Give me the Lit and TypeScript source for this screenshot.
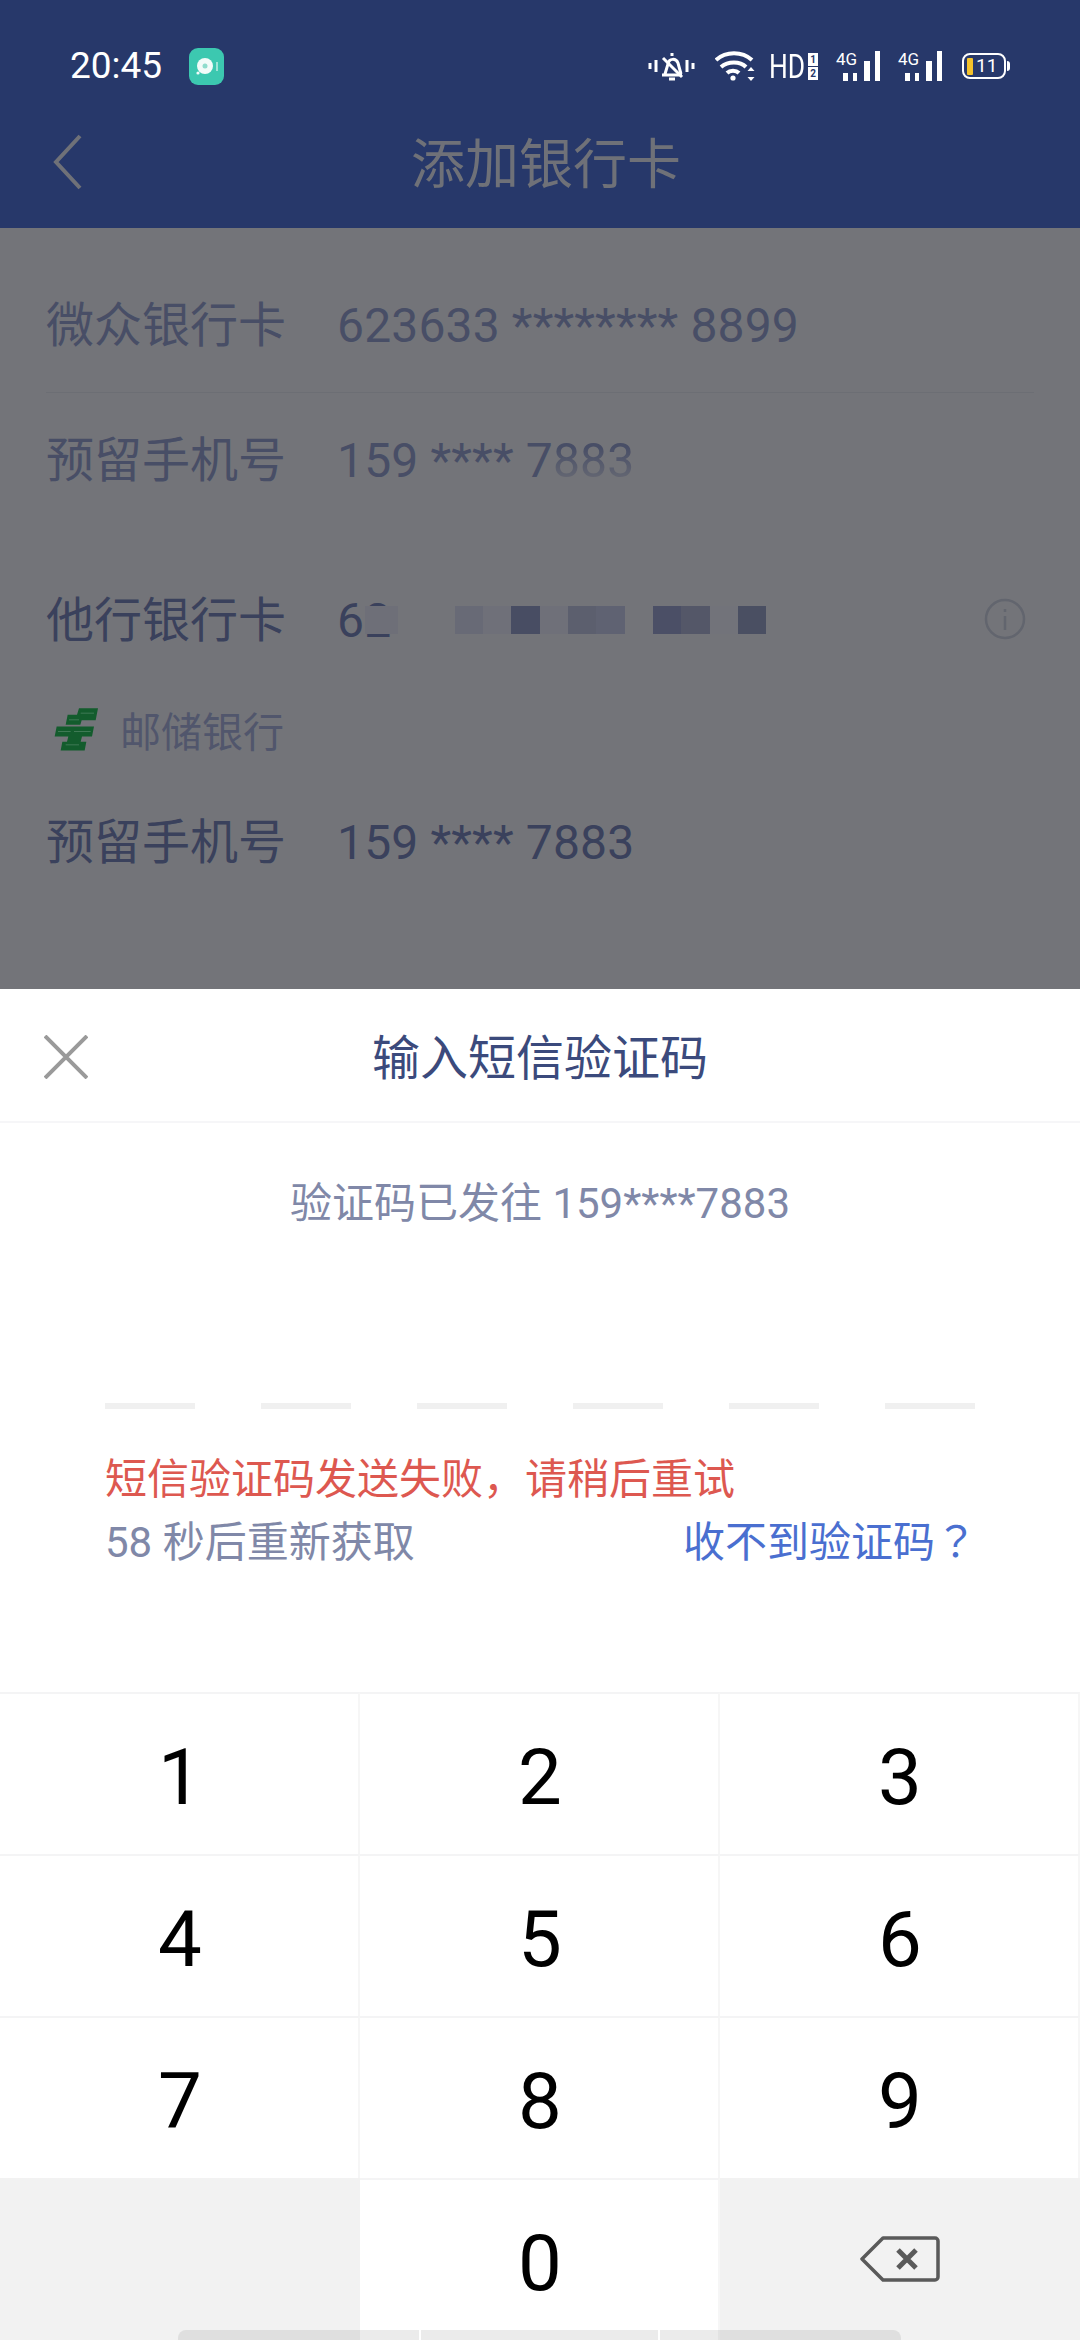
import { LitElement, html, css, svg } from 'lit';
import { customElement } from 'lit/decorators.js';

// pixelated patch over the other bank's card number
const MOSAIC = ['#6e6f78', '#737479', '#737479', '#686a76', '#6f7079', '#484d63', '#6f7079', '#5c5f6e', '#5f6272', '#737479', '#4b4f66', '#545768', '#72737a', '#4a4f62'];

const bars = svg`
  <rect x="7" y="22" width="5" height="8" />
  <rect x="17" y="22" width="4" height="8" />
  <rect x="28" y="10" width="6" height="20" />
  <rect x="39" y="0" width="5" height="30" />`;

@customElement('sim-signal')
class SimSignal extends LitElement {
  static styles = css`
    :host {
      display: block;
      position: relative;
      width: 44px;
      height: 30px;
    }
    svg {
      display: block;
      fill: #fff;
    }
    .net {
      position: absolute;
      left: 0;
      top: 1px;
      font: 17px/15px Roboto, sans-serif;
      color: #fff;
    }
  `;

  render() {
    return html`<svg width="44" height="30" viewBox="0 0 44 30">${bars}</svg><span class="net">4G</span>`;
  }
}

@customElement('status-bar')
class StatusBar extends LitElement {
  static styles = css`
    :host {
      display: flex;
      align-items: center;
      height: 86px;
      padding: 46px 68px 0 70px;
      box-sizing: border-box;
      color: #fff;
      font-family: Roboto, sans-serif;
    }
    .time {
      font-size: 37px;
      line-height: 40px;
      width: 119px;
    }
    .right {
      margin-left: auto;
      display: flex;
      align-items: center;
    }
    svg {
      display: block;
    }
    .wifi {
      margin-left: 20px;
    }
    .hd {
      font-size: 33px;
      line-height: 33px;
      width: 39px;
      margin-left: 14px;
      display: inline-block;
      transform: scaleX(0.8);
      transform-origin: left center;
    }
    .slots {
      display: flex;
      flex-direction: column;
      gap: 1px;
      width: 10px;
      margin-right: 18px;
    }
    .slots span {
      height: 13px;
      font: bold 10px/13px Roboto, sans-serif;
      text-align: center;
      background: #fff;
      color: #27386a;
    }
    sim-signal + sim-signal {
      margin-left: 18px;
    }
    .battery {
      position: relative;
      display: flex;
      align-items: center;
      margin: 0 6px 0 20px;
      width: 44px;
      height: 26px;
      border: 2px solid #fff;
      border-radius: 8px;
      box-sizing: border-box;
      padding-left: 3px;
      font-size: 19px;
      line-height: 22px;
    }
    .battery i {
      width: 6px;
      height: 17px;
      background: #f4c22b;
      margin-right: 3px;
      border-radius: 1px;
    }
    .battery::after {
      content: '';
      position: absolute;
      right: -6px;
      top: 6px;
      width: 3px;
      height: 10px;
      border-radius: 0 3px 3px 0;
      background: #fff;
    }
  `;

  render() {
    return html`
      <span class="time">20:45</span>
      <svg width="35" height="37" viewBox="0 0 35 37">
        <rect width="35" height="37" rx="9" fill="#3cc8b0" />
        <circle cx="16" cy="18" r="8" fill="#f2fbf9" />
        <circle cx="16" cy="18" r="2.5" fill="#8fdccd" />
        <circle cx="9" cy="25" r="1.6" fill="#f2fbf9" />
        <path d="M28 14v9" stroke="#bfeee5" stroke-width="1.5" />
      </svg>
      <div class="right">
        <svg width="47" height="30" viewBox="0 0 47 30" fill="none" stroke="#fff" stroke-width="3">
          <path d="M2 12v6M8 9v12M39 9v12M45 12v6" />
          <path d="M14 24h20M17 23l3-10c1-6 8-6 10-1l3 11" />
          <path d="M24 2v3M15 7l19 19" />
          <path d="M21 28h6" />
        </svg>
        <svg class="wifi" width="40" height="30" viewBox="0 0 40 30" fill="none" stroke="#fff" stroke-width="4">
          <path d="M1 9c10-9 26-9 36 0" />
          <path d="M6 16c7-6 19-6 25 0" />
          <path d="M12 22c3-3 9-3 12 0" />
          <circle cx="18" cy="27" r="2.6" fill="#fff" stroke="none" />
          <path d="M36 16l-3.500 4h7zM36 30l-3.500-4h7z" fill="#fff" stroke="none" />
        </svg>
        <span class="hd">HD</span>
        <span class="slots"><span>1</span><span>2</span></span>
        <sim-signal></sim-signal>
        <sim-signal></sim-signal>
        <span class="battery"><i></i>11</span>
      </div>
    `;
  }
}

@customElement('card-row')
class CardRow extends LitElement {
  static properties = {
    label: { type: String },
    value: { type: String },
  };

  label = '';
  value = '';

  static styles = css`
    :host {
      display: flex;
      align-items: center;
      height: 68px;
      color: var(--row-color, #3a415c);
      font-family: Roboto, "Noto Sans CJK SC", sans-serif;
    }
    .label {
      width: 291px;
      flex: none;
      font-size: 48px;
      line-height: 68px;
    }
    .value {
      display: flex;
      align-items: center;
      font-size: 48px;
      line-height: 68px;
      letter-spacing: 0.15px;
    }
  `;

  render() {
    return html`<span class="label">${this.label}</span><span class="value">${this.value}<slot></slot></span><slot name="end"></slot>`;
  }
}

@customElement('app-root')
class AppRoot extends LitElement {
  static styles = css`
    :host {
      display: flex;
      flex-direction: column;
      width: 1080px;
      height: 2340px;
      overflow: hidden;
      background: #fff;
      font-family: Roboto, "Noto Sans CJK SC", sans-serif;
    }
    .top {
      height: 228px;
      flex: none;
      background: #27386a;
    }
    .nav {
      position: relative;
      display: flex;
      align-items: center;
      justify-content: center;
      height: 142px;
      padding: 6px 0 0 12px;
      box-sizing: border-box;
      color: #6f7178;
      font-size: 54px;
    }
    .nav svg {
      position: absolute;
      left: 52px;
      top: 48px;
    }
    .dim {
      height: 761px;
      flex: none;
      box-sizing: border-box;
      background: #737479;
      padding: 64px 46px 0;
    }
    .prev {
      --row-color: #484e66;
    }
    .sep {
      height: 1px;
      background: #6c6e74;
      margin: 32px 0 34px;
    }
    .other {
      margin-top: 92px;
    }
    .fade {
      display: inline-block;
      -webkit-mask-image: linear-gradient(180deg, #000 30%, rgba(0, 0, 0, 0.2) 85%);
      mask-image: linear-gradient(180deg, #000 30%, rgba(0, 0, 0, 0.2) 85%);
    }
    .mosaic {
      display: flex;
      height: 28px;
      margin: -2px 0 0 -26px;
    }
    .mosaic i {
      width: 28.3px;
      height: 28px;
    }
    .mosaic i:first-child {
      width: 33px;
    }
    .info {
      margin: 0 8px 4px auto;
    }
    .bank {
      display: flex;
      align-items: center;
      height: 60px;
      margin: 44px 0 50px 8px;
      color: #51566c;
      font-size: 41px;
      gap: 22px;
    }
    .sheet {
      flex: 1;
      display: flex;
      flex-direction: column;
      min-height: 0;
    }
    .sheet-head {
      position: relative;
      display: flex;
      align-items: center;
      justify-content: center;
      flex: none;
      height: 134px;
      padding-bottom: 2px;
      box-sizing: border-box;
      border-bottom: 2px solid #f6f6f8;
      color: #3b4a7c;
      font-size: 48px;
    }
    .sheet-head svg {
      position: absolute;
      left: 44px;
      top: 46px;
    }
    .sent {
      margin-top: 51px;
      text-align: center;
      font-size: 42px;
      line-height: 60px;
      color: #8088a8;
    }
    .dashes {
      display: flex;
      gap: 66px;
      margin: 169px 0 0 105px;
    }
    .dashes i {
      width: 90px;
      height: 6px;
      background: #f0f0f0;
    }
    .error {
      margin: 41px 0 0 105px;
      font-size: 42px;
      line-height: 60px;
      color: #dd5850;
    }
    .hint {
      display: flex;
      justify-content: space-between;
      margin: 3px 103px 0 105px;
      font-size: 42px;
      line-height: 60px;
      color: #8088a8;
    }
    .hint a {
      color: #4a6fd0;
    }
    .hint a span {
      font-family: "Noto Sans CJK TC", sans-serif;
      line-height: 0;
    }
    .keys {
      margin-top: auto;
      display: grid;
      grid-template-columns: repeat(3, 1fr);
      grid-auto-rows: 162px;
      position: relative;
    }
    .key {
      display: flex;
      align-items: center;
      justify-content: center;
      box-sizing: border-box;
      padding: 6px 0 0 2px;
      border-right: 2px solid #f6f6f6;
      border-top: 2px solid #f4f4f5;
      font-size: 78px;
      color: #000;
    }
    .key.blank {
      padding: 0;
      background: #f2f2f2;
      border: none;
    }
    .gesture {
      position: absolute;
      left: 178px;
      bottom: 0;
      height: 10px;
      display: grid;
      grid-template-columns: 241px 237px 241px;
      gap: 2px;
    }
    .gesture i {
      background: rgba(0, 0, 0, 0.08);
    }
    .gesture i:first-child {
      border-radius: 8px 0 0 0;
    }
    .gesture i:last-child {
      border-radius: 0 8px 0 0;
    }
  `;

  render() {
    const digits = ['1', '2', '3', '4', '5', '6', '7', '8', '9'];
    return html`
      <div class="top">
        <status-bar></status-bar>
        <div class="nav">
          <svg width="32" height="56" viewBox="0 0 32 56" fill="none" stroke="#6f7178" stroke-width="4">
            <path d="M28 2L4 28l24 26" />
          </svg>
          添加银行卡
        </div>
      </div>
      <div class="dim">
        <card-row class="prev" label="微众银行卡" value="623633 ******** 8899"></card-row>
        <div class="sep"></div>
        <card-row class="prev" label="预留手机号" value="159 **** 7"><span class="fade">883</span></card-row>
        <card-row class="other" label="他行银行卡" value="62">
          <span class="mosaic">${MOSAIC.map((c) => html`<i style="background:${c}"></i>`)}</span>
          <svg slot="end" class="info" width="42" height="42" viewBox="0 0 42 42" fill="none" stroke="#62656e" stroke-width="2.5">
            <circle cx="21" cy="21" r="19" />
            <path d="M21 18v14M21 11v3" />
          </svg>
        </card-row>
        <div class="bank">
          <svg width="44" height="43" viewBox="70 55 132 128">
            <path fill="#135c2d" d="M145 55h57l-7 36h-42l-4 14h-44l6-30h28zM78 110h112l-6 30h-30l-4 16h17l-5 26H90l5-26h14l4-16H72z" />
            <path fill="none" stroke="#3f7a55" stroke-width="3" d="M150 70h40M115 90h30M82 125h38M130 125h50M105 165h40" />
          </svg>
          邮储银行
        </div>
        <card-row label="预留手机号" value="159 **** 7883"></card-row>
      </div>
      <div class="sheet">
        <div class="sheet-head">
          <svg width="44" height="44" viewBox="0 0 44 44" stroke="#9a9a9a" stroke-width="4">
            <path d="M1 1l42 42M43 1L1 43" />
          </svg>
          输入短信验证码
        </div>
        <div class="sent">验证码已发往 159****7883</div>
        <div class="dashes">${[0, 1, 2, 3, 4, 5].map(() => html`<i></i>`)}</div>
        <div class="error">短信验证码发送失败，请稍后重试</div>
        <div class="hint"><span>58 秒后重新获取</span><a>收不到验证码<span>？</span></a></div>
        <div class="keys">
          ${digits.map((d) => html`<div class="key">${d}</div>`)}
          <div class="key blank"></div>
          <div class="key">0</div>
          <div class="key blank">
            <svg width="80" height="46" viewBox="0 0 80 46" fill="none" stroke="#5a5a5a" stroke-width="3.500" stroke-linejoin="round">
              <path d="M23 2h52a3 3 0 0 1 3 3v36a3 3 0 0 1-3 3H23L2 23z" />
              <path d="M38 14l18 18M56 14L38 32" stroke-width="5" />
            </svg>
          </div>
          <div class="gesture"><i></i><i></i><i></i></div>
        </div>
      </div>
    `;
  }
}
